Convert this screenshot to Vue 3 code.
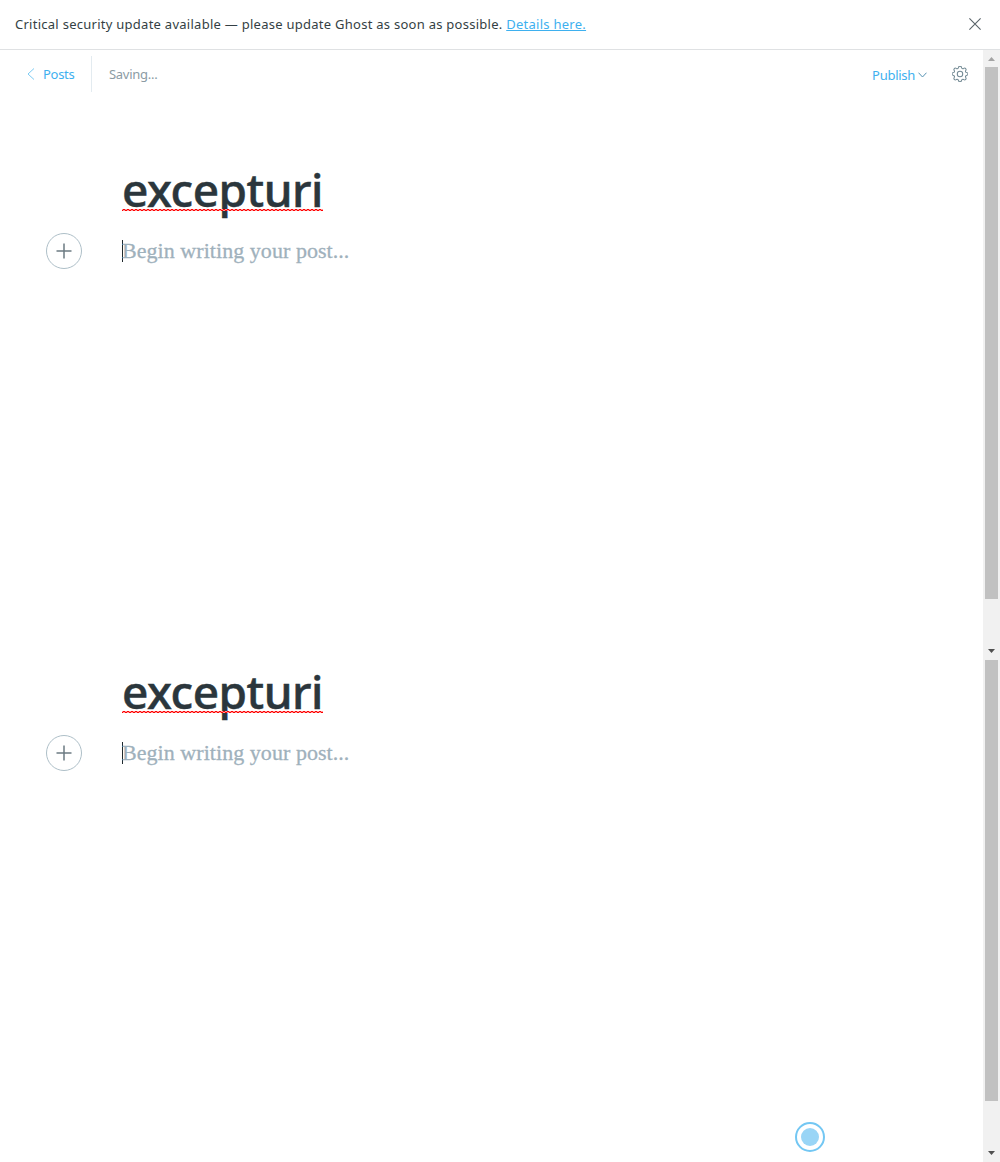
<script setup>
const panes = [
  { id: 'upper', toolbar: true },
  { id: 'lower', toolbar: false },
]
</script>

<template>
  <div class="app">
    <header class="alert">
      <p class="alert-text">Critical security update available — please update Ghost as soon as possible. <a class="details">Details here.</a></p>
      <svg class="close" width="12" height="12" viewBox="0 0 12 12"><path d="M.4.4l11.2 11.2M11.6.4L.4 11.6" /></svg>
    </header>
    <section v-for="pane in panes" :key="pane.id" class="pane" :class="pane.id">
      <main class="content">
        <nav v-if="pane.toolbar" class="toolbar">
          <a class="back">
            <svg width="8" height="12" viewBox="0 0 8 12"><path d="M7 .5L1 6l6 5.5" /></svg>
            <span class="posts">Posts</span>
          </a>
          <span class="saving">Saving...</span>
          <a class="publish">
            <span class="publish-label">Publish</span>
            <svg width="9" height="6" viewBox="0 0 9 6"><path d="M.5.7l4 4.3 4-4.3" /></svg>
          </a>
          <svg class="gear" width="16" height="16" viewBox="0.500 0.500 17 17">
            <circle cx="9" cy="9" r="2.9" />
            <path d="M7.4 2.1C7.7.2 10.3.2 10.6 2.1c.2 1.1 1.3 1.6 2.3 1 1.6-1.1 3.3.6 2.2 2.2-.6 1-.1 2 .9 2.200 2 .3 2 2.700 0 3-1 .2-1.500 1.300-.9 2.200 1.100 1.600-.6 3.300-2.200 2.200-1-.6-2.100-.1-2.300.9-.3 2-2.900 2-3.200 0-.2-1-1.300-1.500-2.300-.9-1.600 1.100-3.300-.6-2.200-2.200.6-.9.1-2-.9-2.200-2-.3-2-2.700 0-3 1-.2 1.500-1.200.9-2.200C1.800 3.700 3.500 2 5.100 3.100c1 .6 2.100.1 2.300-1z" />
          </svg>
        </nav>
        <div class="editor">
          <h1 class="title"><span>excepturi</span>
            <svg class="squiggle" width="201" height="2">
              <defs>
                <pattern :id="`wave-${pane.id}`" width="4" height="2" patternUnits="userSpaceOnUse">
                  <path d="M1 .5h2M3 1.500h1M0 1.500h1" stroke="#f00" />
                  <path d="M0 .5h1M3 .5h1M1 1.500h2" stroke="#ff9a9a" />
                </pattern>
              </defs>
              <rect width="201" height="2" :fill="`url(#wave-${pane.id})`" />
            </svg>
          </h1>
          <div class="body-row">
            <button class="add"><svg width="16" height="16" viewBox="0 0 16 16"><path d="M8 .5v15M.5 8h15" /></svg></button>
            <span class="caret"></span>
            <span class="placeholder">Begin writing your post...</span>
          </div>
        </div>
      </main>
      <div class="scrollbar">
        <svg v-if="pane.toolbar" class="up" width="7" height="4" viewBox="0 0 7 4"><path d="M0 4h7L3.500 0z" /></svg>
        <div class="thumb"></div>
        <svg class="down" width="7" height="4" viewBox="0 0 7 4"><path d="M0 0h7L3.500 4z" /></svg>
      </div>
    </section>
    <div class="beacon"><i></i></div>
  </div>
</template>

<style>
body { margin: 0; background: #fff; }
</style>

<style scoped>
.app { position: relative; width: 1000px; height: 1162px; overflow: hidden; display: flex; flex-direction: column; font-family: "Noto Sans", sans-serif; background: #fff; }
svg { display: block; flex: none; fill: none; }
.alert { box-sizing: border-box; height: 50px; flex: none; border-bottom: 1px solid #dfe1e3; display: flex; align-items: center; justify-content: space-between; padding: 0 19px 0 15px; }
.alert-text { margin: 0; padding-bottom: 2px; font-size: 13px; line-height: 20px; letter-spacing: .265px; color: #343f44; white-space: nowrap; }
.details { color: #3eb0ef; text-decoration: underline; }
.close { stroke: #596369; stroke-width: 1.100; margin-bottom: 1px; }
.pane { display: flex; flex: none; }
.upper { height: 610px; }
.lower { height: 502px; }
.content { width: 983px; }
.toolbar { height: 42px; padding-top: 6px; box-sizing: border-box; display: flex; align-items: center; font-size: 13px; line-height: 18px; letter-spacing: -.28px; }
.back { box-sizing: border-box; width: 92px; height: 36px; padding-left: 27px; border-right: 1px solid #e3ebf0; display: flex; align-items: center; gap: 8px; color: #3eb0ef; stroke: #7ccbf3; }
.posts, .saving, .publish-label { stroke: none; }
.saving { margin-left: 17px; color: #8b9ba4; }
.publish { margin-left: auto; display: flex; align-items: center; gap: 3px; color: #3eb0ef; stroke: #5793b3; padding-top: 2px; }
.gear { margin: 0 15px 0 25px; stroke: #738a94; stroke-width: 1.100; }
.editor { padding-top: 68px; }
.lower .editor { padding-top: 2px; }
.title { position: relative; margin: 0 0 0 122px; height: 64px; line-height: 58px; font-size: 46px; font-weight: 500; letter-spacing: -.5px; -webkit-text-stroke: .5px #2b363c; color: #2b363c; white-space: nowrap; }
.squiggle { position: absolute; left: 0; top: 49px; }
.body-row { display: flex; align-items: center; height: 36px; margin: 9px 0 0 46px; }
.add { box-sizing: border-box; width: 36px; height: 36px; padding: 0; border: 1px solid #aebfc8; border-radius: 50%; background: #fff; display: flex; align-items: center; justify-content: center; stroke: #6c7b82; stroke-width: 1.500; }
.caret { width: 1px; height: 22px; margin-left: 40px; background: #20292d; }
.placeholder { margin-left: -1px; font-family: "Liberation Serif", serif; font-size: 22px; line-height: 30px; color: #9fb1bc; letter-spacing: .05px; -webkit-text-stroke: .3px #9fb1bc; white-space: nowrap; }
.scrollbar { width: 17px; background: #f1f1f1; display: flex; flex-direction: column; align-items: center; }
.up { margin-top: 7px; fill: #a3a3a3; }
.thumb { width: 13px; height: 532px; margin-top: 6px; background: #c1c1c1; }
.lower .thumb { height: 441px; margin-top: 0; }
.down { margin-top: auto; margin-bottom: 7px; fill: #505050; }
.beacon { position: absolute; box-sizing: border-box; left: 795px; top: 1122px; width: 30px; height: 30px; border: 2px solid #73c7f3; border-radius: 50%; display: flex; align-items: center; justify-content: center; }
.beacon i { width: 18px; height: 18px; border-radius: 50%; background: #99d5f6; }
</style>
